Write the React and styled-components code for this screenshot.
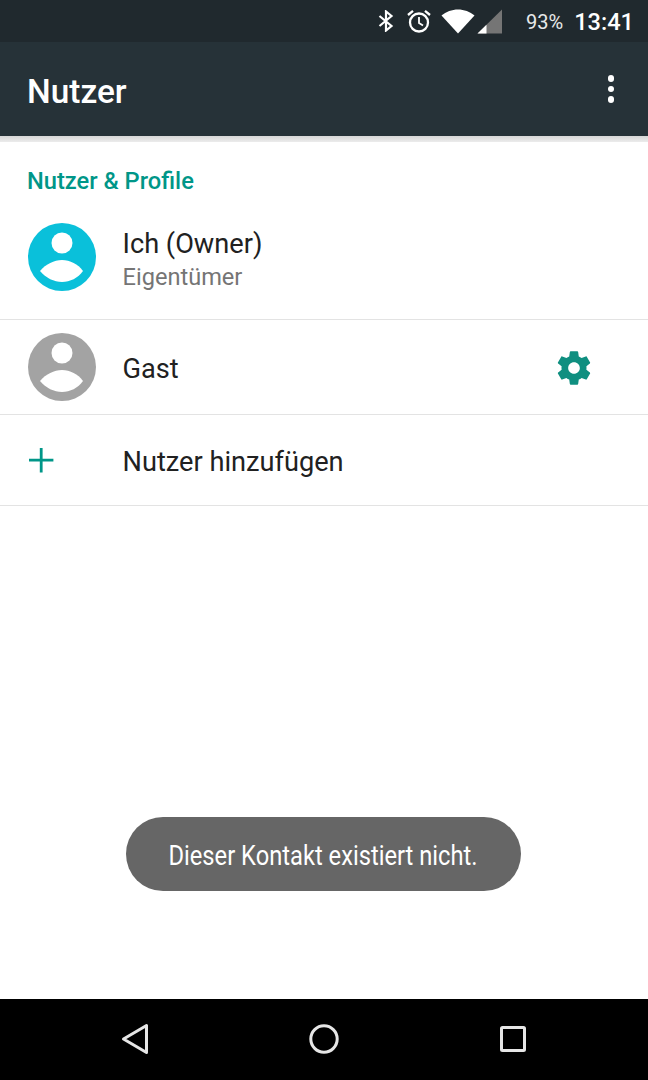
import React from 'react';
import styled, { createGlobalStyle } from 'styled-components';

const GEAR = "M19.43 12.98c.04-.32.07-.64.07-.98s-.03-.66-.07-.98l2.11-1.65c.19-.15.24-.42.12-.64l-2-3.46c-.12-.22-.39-.3-.61-.22l-2.49 1c-.52-.4-1.08-.73-1.69-.98l-.38-2.65C14.46 2.18 14.25 2 14 2h-4c-.25 0-.46.18-.49.42l-.38 2.65c-.61.25-1.17.59-1.69.98l-2.49-1c-.23-.09-.49 0-.61.22l-2 3.46c-.13.22-.07.49.12.64l2.11 1.65c-.04.32-.07.65-.07.98s.03.66.07.98l-2.11 1.65c-.19.15-.24.42-.12.64l2 3.46c.12.22.39.3.61.22l2.49-1c.52.4 1.08.73 1.69.98l.38 2.65c.03.24.24.42.49.42h4c.25 0 .46-.18.49-.42l.38-2.65c.61-.25 1.17-.59 1.69-.98l2.49 1c.23.09.49 0 .61-.22l2-3.46c.12-.22.07-.49-.12-.64l-2.11-1.65zM12 15.5c-1.93 0-3.5-1.57-3.5-3.5s1.57-3.5 3.5-3.5 3.5 1.57 3.5 3.5-1.57 3.5-3.5 3.5z";

const Global = createGlobalStyle`
  html, body { margin: 0; padding: 0; background: #fff; }
  body { font-family: Roboto, "Liberation Sans", sans-serif; }
`;

const Page = styled.div`
  width: 648px;
  height: 1080px;
  display: flex;
  flex-direction: column;
  overflow: hidden;
`;

const StatusBar = styled.div`
  height: 42px;
  flex: none;
  background: #20292e;
  display: flex;
  align-items: center;
  justify-content: flex-end;
  padding-right: 14px;
  color: #fff;
`;

const StatusIcon = styled.svg`
  display: block;
  flex: none;
  margin-left: ${(p) => p.$gap}px;
`;

const Battery = styled.span`
  font-size: 20px;
  margin-left: 24px;
  padding-top: 1px;
  color: #e8e9ea;
`;

const Clock = styled.span`
  font-size: 23.6px;
  font-weight: 500;
  margin-left: 11px;
  padding-top: 2px;
`;

const AppBar = styled.header`
  height: 94px;
  flex: none;
  background: #263238;
  display: flex;
  align-items: center;
  justify-content: space-between;
  padding: 0 34px 0 27px;
`;

const Title = styled.h1`
  margin: 0;
  padding-top: 4px;
  font-size: 33.4px;
  font-weight: 500;
  color: #fff;
`;

const MoreButton = styled.div`
  display: flex;
  flex-direction: column;
  gap: 4px;
`;

const Dot = styled.span`
  width: 6.5px;
  height: 6.5px;
  border-radius: 50%;
  background: #fff;
`;

const Shade = styled.div`
  height: 6px;
  flex: none;
  background: linear-gradient(#d6d7d7, #ececec);
`;

const Main = styled.main`
  flex: 1;
  display: flex;
  flex-direction: column;
  background: #fff;
`;

const SectionTitle = styled.h2`
  margin: 0;
  padding: 25px 27px 0;
  height: 41px;
  font-size: 23.7px;
  line-height: 28px;
  font-weight: 500;
  color: #009688;
`;

const Row = styled.div`
  height: ${(p) => p.$height}px;
  padding-bottom: ${(p) => p.$bottom || 0}px;
  display: flex;
  align-items: center;
  padding-left: 28px;
  padding-right: 54px;
  border-bottom: 1px solid #e3e3e3;
`;

const Lead = styled.div`
  width: 94.5px;
  flex: none;
  display: flex;
  align-items: center;
`;

const Labels = styled.div`
  flex: 1;
  display: flex;
  flex-direction: column;
  padding-top: ${(p) => p.$top}px;
`;

const Name = styled.div`
  font-size: 27.2px;
  line-height: 34px;
  color: #212121;
`;

const Sub = styled.div`
  font-size: 23.6px;
  line-height: 33px;
  color: #757575;
`;

const GearIcon = styled.svg`
  display: block;
  margin-top: 2px;
  fill: #0f8f80;
`;

const Toast = styled.div`
  align-self: flex-start;
  margin: auto 0 108px 126px;
  width: 395px;
  height: 74px;
  display: flex;
  align-items: center;
  justify-content: center;
  background: #666;
  border-radius: 37px;
  color: #fff;
  font-size: 27px;
`;

const ToastText = styled.span`
  display: inline-block;
  white-space: nowrap;
  padding-top: 4px;
  transform: scaleX(0.878);
`;

const NavBar = styled.nav`
  height: 80px;
  padding-bottom: 1px;
  flex: none;
  background: #000;
  display: flex;
  align-items: center;
  justify-content: center;
  gap: 149px;
`;

const NavIcon = styled.svg`
  display: block;
  width: 40px;
  height: 40px;
  fill: none;
  stroke: #e6e6e6;
  stroke-width: 3;
  stroke-linejoin: round;
`;

const Avatar = ({ color }) => (
  <svg width="68" height="68" viewBox="0 0 68 68">
    <circle cx="34" cy="34" r="34" fill={color} />
    <circle cx="34" cy="20" r="10.5" fill="#fff" />
    <path d="M12 48C18 41 26 37 34 37C42 37 50 41 55 48C50 55 42 59 34 59C26 59 18 55 12 48Z" fill="#fff" />
  </svg>
);

export default function App() {
  return (
    <Page>
      <Global />
      <StatusBar>
        <StatusIcon $gap={0} width="16" height="22" viewBox="0 0 16 22" fill="none" stroke="#fff" strokeWidth="2.2">
          <path d="M1.5 6l12 10-5.5 4.5V1.5L13.500 6l-12 10" />
        </StatusIcon>
        <StatusIcon $gap={12} width="26" height="26" viewBox="0 0 26 26" fill="none" stroke="#fff" strokeWidth="2.3">
          <circle cx="13" cy="14.500" r="9" />
          <path d="M13 9v6l4 2.500" strokeWidth="1.800" />
          <path d="M2 7l5-4.200M24 7l-5-4.200" />
        </StatusIcon>
        <StatusIcon $gap={9} width="34" height="25" viewBox="0 0 34 25" fill="#fff">
          <path d="M0.500 6.500C5 2.800 11 0.500 17 0.500S29 2.800 33.500 6.500L17 24.500Z" />
        </StatusIcon>
        <StatusIcon $gap={2} width="25" height="25" viewBox="0 0 25 25">
          <path d="M0.500 24.500L25 0.500V24.500Z" fill="#757575" />
          <path d="M0.500 24.500L9.500 15.700V24.500Z" fill="#fff" />
        </StatusIcon>
        <Battery>93%</Battery>
        <Clock>13:41</Clock>
      </StatusBar>
      <AppBar>
        <Title>Nutzer</Title>
        <MoreButton>
          <Dot />
          <Dot />
          <Dot />
        </MoreButton>
      </AppBar>
      <Shade />
      <Main>
        <SectionTitle>Nutzer &amp; Profile</SectionTitle>
        <Row $height={97} $bottom={14}>
          <Lead><Avatar color="#0ac0da" /></Lead>
          <Labels $top={8}>
            <Name>Ich (Owner)</Name>
            <Sub>Eigentümer</Sub>
          </Labels>
        </Row>
        <Row $height={94}>
          <Lead><Avatar color="#a3a3a3" /></Lead>
          <Labels $top={4}>
            <Name>Gast</Name>
          </Labels>
          <GearIcon width="40" height="40" viewBox="0 0 24 24">
            <path d={GEAR} />
          </GearIcon>
        </Row>
        <Row $height={90}>
          <Lead>
            <svg width="26" height="26" viewBox="0 0 26 26" fill="#009688">
              <path d="M11.800 1h2.800v10.800h10.800v2.800H14.600v10.800h-2.800V14.600H1v-2.800h10.800z" />
            </svg>
          </Lead>
          <Labels $top={4}>
            <Name>Nutzer hinzufügen</Name>
          </Labels>
        </Row>
        <Toast><ToastText>Dieser Kontakt existiert nicht.</ToastText></Toast>
      </Main>
      <NavBar>
        <NavIcon viewBox="0 0 40 40"><path d="M8.500 20L31.500 6.500V33.500Z" /></NavIcon>
        <NavIcon viewBox="0 0 40 40"><circle cx="20" cy="20" r="13.200" /></NavIcon>
        <NavIcon viewBox="0 0 40 40"><rect x="8.500" y="8.500" width="23" height="23" rx="1" /></NavIcon>
      </NavBar>
    </Page>
  );
}
